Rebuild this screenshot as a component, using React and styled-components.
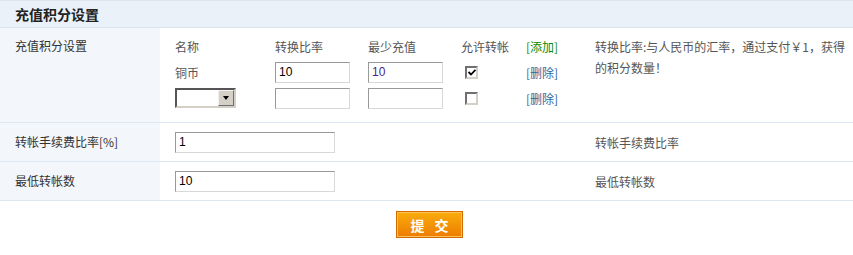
import React from "react";
import styled, { createGlobalStyle } from "styled-components";

const GlobalStyle = createGlobalStyle`
  html, body {
    margin: 0;
    padding: 0;
    background: #fff;
  }
  body {
    font-family: "Noto Sans CJK SC", "Liberation Sans", sans-serif;
    font-size: 12px;
    color: #333;
  }
`;

const Panel = styled.div`
  width: 853px;
`;

const PanelTitle = styled.div`
  height: 26px;
  line-height: 26px;
  padding-left: 15px;
  background: #eaf1f8;
  border-top: 1px solid #dbe6f1;
  border-bottom: 1px solid #d6e3ef;
  font-size: 14px;
  font-weight: bold;
  color: #222;
`;

const Row = styled.div`
  display: grid;
  grid-template-columns: 160px 420px 1fr;
  border-bottom: 1px solid #dce7f2;
  min-height: ${(p) => p.$h}px;
`;

const LabelCell = styled.div`
  background: #f3f7fb;
  padding: ${(p) => (p.$top ? "5px 15px 0" : "0 15px")};
  display: flex;
  align-items: ${(p) => (p.$top ? "flex-start" : "center")};
  line-height: 26px;
  color: #333;
`;

const FieldCell = styled.div`
  padding: ${(p) => (p.$top ? "5px 15px 0" : "0 15px")};
  display: flex;
  align-items: ${(p) => (p.$top ? "flex-start" : "center")};
`;

const NoteCell = styled.div`
  padding: ${(p) => (p.$top ? "8px 4px 0 15px" : "0 4px 0 15px")};
  display: flex;
  align-items: ${(p) => (p.$top ? "flex-start" : "center")};
  line-height: 21px;
  color: #555;
`;

const RateGrid = styled.div`
  display: grid;
  grid-template-columns: 100px 93px 93px 65px 60px;
  grid-auto-rows: 26px;
  align-items: center;
  color: #555;
`;

const TextInput = styled.input`
  box-sizing: border-box;
  width: ${(p) => p.$w}px;
  height: 21px;
  padding: 0 3px;
  margin: 0;
  border: 1px solid;
  border-color: #999 #d8d8d8 #d8d8d8 #999;
  font-family: "Liberation Sans", Arial, sans-serif;
  font-size: 12px;
  color: ${(p) => p.$color || "#000"};
  background: #fff;
  outline: none;
`;

const Select = styled.div`
  box-sizing: border-box;
  width: 61px;
  height: 20px;
  display: flex;
  justify-content: flex-end;
  border: 2px solid;
  border-color: #555 #d4d0c8 #d4d0c8 #555;
  background: #fff;
`;

const SelectArrow = styled.div`
  box-sizing: border-box;
  width: 16px;
  height: 16px;
  background: #d4d0c8;
  border: 1px solid;
  border-color: #f4f2ee #6f6f6f #6f6f6f #f4f2ee;
  display: flex;
  align-items: center;
  justify-content: center;

  &::after {
    content: "";
    border-left: 3.5px solid transparent;
    border-right: 3.5px solid transparent;
    border-top: 4px solid #000;
  }
`;

const Check = styled.span`
  box-sizing: border-box;
  display: inline-flex;
  align-items: center;
  justify-content: center;
  width: 13px;
  height: 13px;
  margin-left: 4px;
  border: 2px solid;
  border-color: #707070 #d4d0c8 #d4d0c8 #707070;
  background: #fff;
`;

const Action = styled.a`
  color: ${(p) => (p.$add ? "#0a8a0a" : "#2f6699")};
  text-decoration: none;
  cursor: pointer;
`;

const Footer = styled.div`
  display: flex;
  justify-content: center;
  padding: 10px 0 0 6px;
`;

const SubmitButton = styled.button`
  box-sizing: border-box;
  width: 67px;
  height: 27px;
  padding: 0;
  border: 1px solid #d36a00;
  box-shadow: inset 0 0 0 1px #fbc25a;
  background: linear-gradient(#f9ad0c, #ee7c00);
  color: #fff;
  font-family: "Noto Sans CJK SC", sans-serif;
  font-size: 14px;
  font-weight: bold;
  letter-spacing: 0;
  display: flex;
  align-items: center;
  justify-content: center;
  gap: 10px;
  cursor: pointer;
`;

function CheckBox({ checked }) {
  return (
    <Check>
      {checked && (
        <svg width="8" height="7" viewBox="0 0 8 7">
          <path d="M0.5 3 L3 5.5 L7.5 0.8" stroke="#000" strokeWidth="1.8" fill="none" />
        </svg>
      )}
    </Check>
  );
}

export default function App() {
  return (
    <>
      <GlobalStyle />
      <Panel>
        <PanelTitle>充值积分设置</PanelTitle>

        <Row $h={94}>
          <LabelCell $top>充值积分设置</LabelCell>
          <FieldCell $top>
            <RateGrid>
              <span>名称</span>
              <span>转换比率</span>
              <span>最少充值</span>
              <span>允许转帐</span>
              <Action $add>[添加]</Action>

              <span>铜币</span>
              <TextInput $w={75} defaultValue="10" />
              <TextInput $w={75} defaultValue="10" $color="#4b1f8c" />
              <CheckBox checked />
              <Action>[删除]</Action>

              <Select>
                <SelectArrow />
              </Select>
              <TextInput $w={75} />
              <TextInput $w={75} />
              <CheckBox />
              <Action>[删除]</Action>
            </RateGrid>
          </FieldCell>
          <NoteCell $top>转换比率:与人民币的汇率，通过支付￥1，获得的积分数量！</NoteCell>
        </Row>

        <Row $h={38}>
          <LabelCell>转帐手续费比率[%]</LabelCell>
          <FieldCell>
            <TextInput $w={160} defaultValue="1" />
          </FieldCell>
          <NoteCell>转帐手续费比率</NoteCell>
        </Row>

        <Row $h={38}>
          <LabelCell>最低转帐数</LabelCell>
          <FieldCell>
            <TextInput $w={160} defaultValue="10" />
          </FieldCell>
          <NoteCell>最低转帐数</NoteCell>
        </Row>

        <Footer>
          <SubmitButton>
            <span>提</span>
            <span>交</span>
          </SubmitButton>
        </Footer>
      </Panel>
    </>
  );
}
